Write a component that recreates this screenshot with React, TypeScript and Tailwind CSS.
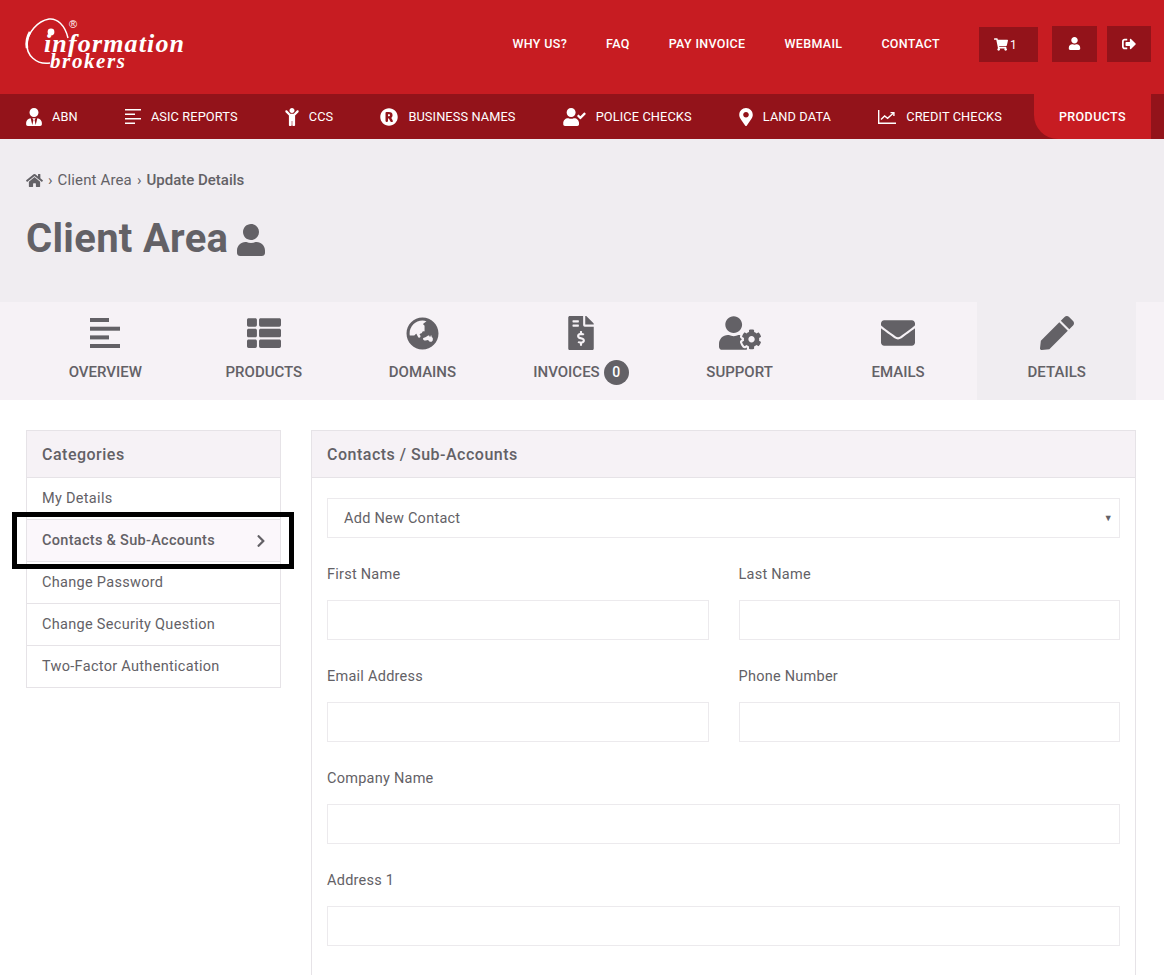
import React from 'react';
import {
  FaUserTie,
  FaChild,
  FaRegistered,
  FaUserCheck,
  FaMapMarkerAlt,
  FaShoppingCart,
  FaUser,
  FaSignOutAlt,
  FaHome,
  FaThList,
  FaGlobeAsia,
  FaFileInvoiceDollar,
  FaUserCog,
  FaEnvelope,
  FaPen,
  FaChevronRight,
} from 'react-icons/fa';

function Lines({ className }: { className?: string }) {
  return (
    <svg viewBox="0 0 16 15" className={className} fill="currentColor">
      <rect x="0" y="0" width="16" height="1.5" />
      <rect x="0" y="4.5" width="10" height="1.5" />
      <rect x="0" y="9" width="16" height="1.5" />
      <rect x="0" y="13.5" width="10" height="1.5" />
    </svg>
  );
}

function Bars({ className }: { className?: string }) {
  return (
    <svg viewBox="0 0 30 30" className={className} fill="currentColor">
      <rect x="0" y="0" width="19" height="4" />
      <rect x="0" y="8.7" width="30" height="4" />
      <rect x="0" y="17.4" width="19" height="4" />
      <rect x="0" y="26" width="30" height="4" />
    </svg>
  );
}

function ChartIcon({ className }: { className?: string }) {
  return (
    <svg viewBox="0 0 18 14" className={className} fill="none" stroke="currentColor" strokeWidth="1.4">
      <path d="M.7 0v13.3H18" />
      <path d="M3 9.5l3.6-3.6 3 2.4L15.5 3" />
      <path d="M12.5 2.6h3.4V6" />
    </svg>
  );
}

function Logo() {
  return (
    <svg viewBox="0 0 180 76" className="w-[180px] h-[76px]">
      <path d="M59 33C56 20 48 13 40 14 28 16 19 28 18 38c-1 12 9 22 23 20" fill="none" stroke="#fff" strokeWidth="1.5" />
      <path d="M21 27c-3 5-4 10-3 16" fill="none" stroke="#fff" strokeWidth="2.6" />
      <circle cx="42" cy="27" r="3.4" fill="#fff" />
      <text x="60" y="23" fill="#fff" fontFamily="'Liberation Sans', sans-serif" fontSize="11">®</text>
      <text x="35" y="47" textLength="140" fill="#fff" fontFamily="'Liberation Serif', serif" fontStyle="italic" fontWeight="700" fontSize="26">
        information
      </text>
      <text x="41" y="63" textLength="75" fill="#fff" fontFamily="'Liberation Serif', serif" fontStyle="italic" fontWeight="700" fontSize="21">
        brokers
      </text>
    </svg>
  );
}

const topLinks = ['Why Us?', 'FAQ', 'Pay Invoice', 'Webmail', 'Contact'];

const subLinks = [
  { label: 'ABN', icon: <FaUserTie className="w-4 h-[18px]" /> },
  { label: 'ASIC Reports', icon: <Lines className="w-4 h-[15px]" /> },
  { label: 'CCS', icon: <FaChild className="w-[14px] h-[18px]" /> },
  { label: 'Business Names', icon: <FaRegistered className="w-[18px] h-[18px]" /> },
  { label: 'Police Checks', icon: <FaUserCheck className="w-[23px] h-[18px]" /> },
  { label: 'Land Data', icon: <FaMapMarkerAlt className="w-[14px] h-[18px]" /> },
  { label: 'Credit Checks', icon: <ChartIcon className="w-[18px] h-[14px]" /> },
];

const tabs = [
  { label: 'Overview', icon: <Bars className="w-[30px] h-[30px]" /> },
  { label: 'Products', icon: <FaThList className="w-[34px] h-[34px]" /> },
  { label: 'Domains', icon: <FaGlobeAsia className="w-[33px] h-[33px]" /> },
  { label: 'Invoices', icon: <FaFileInvoiceDollar className="w-[26px] h-[34px]" />, badge: '0' },
  { label: 'Support', icon: <FaUserCog className="w-[42px] h-[34px]" /> },
  { label: 'Emails', icon: <FaEnvelope className="w-[36px] h-[34px]" /> },
  { label: 'Details', icon: <FaPen className="w-[34px] h-[34px]" />, active: true },
];

const categories = ['My Details', 'Contacts & Sub-Accounts', 'Change Password', 'Change Security Question', 'Two-Factor Authentication'];

function Field({ label }: { label: string }) {
  return (
    <div>
      <label className="block h-[62px] pt-[27px] text-[14.5px] leading-[20px] tracking-[0.25px] text-[#636166]">{label}</label>
      <input type="text" className="block w-full h-10 border border-[#eceaed] bg-white" />
    </div>
  );
}

export default function App() {
  return (
    <div className="h-[975px] overflow-hidden bg-white text-[#636166] font-['Roboto',sans-serif]">
      {/* top bar */}
      <header className="h-[94px] bg-[#c71c22] flex items-start justify-between pl-[9px] pr-[13px]">
        <div className="pt-[5px]">
          <Logo />
        </div>
        <div className="flex items-center pt-[26px] text-white">
          <nav className="flex gap-[39px] mr-[39px] text-[12.5px] font-medium uppercase tracking-[0.33px] leading-[36px]">
            {topLinks.map(l => (
              <a key={l}>{l}</a>
            ))}
          </nav>
          <div className="flex gap-[14px] items-end">
            <div className="w-[59px] h-[35px] bg-[#93131a] flex items-center pl-[15px] gap-[2px] text-[12px]">
              <FaShoppingCart className="w-[14px] h-[13px]" />1
            </div>
            <div className="flex gap-[10px]">
              <div className="w-[45px] h-9 bg-[#93131a] flex items-center justify-center">
                <FaUser className="w-[13px] h-[13px] mb-[1px]" />
              </div>
              <div className="w-[44px] h-9 bg-[#93131a] flex items-center justify-center">
                <FaSignOutAlt className="w-[14px] h-[14px]" />
              </div>
            </div>
          </div>
        </div>
      </header>

      {/* product nav */}
      <div className="h-[45px] bg-[#93131a] text-white flex items-center pl-[26px] pr-[13px] text-[12.8px] tracking-[0.1px] uppercase">
        <div className="flex justify-between w-[976px]">
          {subLinks.map(s => (
            <a key={s.label} className="flex items-center gap-[10px]">
              {s.icon}
              {s.label}
            </a>
          ))}
        </div>
        <a className="ml-auto self-stretch flex items-center pt-[1px] px-[25px] bg-[#c71c22] rounded-bl-[24px] text-[12.5px] font-medium tracking-[0.4px]">
          Products
        </a>
      </div>

      {/* page title */}
      <section className="h-[163px] bg-[#f0edf1] px-[26px] pt-[32px]">
        <div className="flex items-center gap-[5px] text-[15px] leading-[18px]">
          <FaHome className="w-[17px] h-[15px]" />
          <span>›</span>
          <span className="tracking-[0.15px]">Client Area</span>
          <span>›</span>
          <span className="font-medium">Update Details</span>
        </div>
        <h1 className="mt-[27px] flex items-center gap-[9px] text-[40px] leading-[46px] font-bold tracking-[0.3px]">
          Client Area
          <FaUser className="w-[28px] h-[32px] mt-[2px]" />
        </h1>
      </section>

      {/* tabs */}
      <div className="h-[98px] bg-[#f6f2f6] pl-[26px] pr-[28px] grid grid-cols-7">
        {tabs.map(t => (
          <a key={t.label} className={`flex flex-col items-center pt-[13px] ${t.active ? 'bg-[#f0edf1]' : ''}`}>
            <div className="h-[36px] flex items-center justify-center">{t.icon}</div>
            <div className="mt-[11px] h-[20px] flex items-center gap-[4px] text-[15px] font-medium uppercase">
              {t.label}
              {t.badge && (
                <span className="w-[25px] h-[25px] rounded-full bg-[#636166] text-white flex items-center justify-center text-[14px]">
                  {t.badge}
                </span>
              )}
            </div>
          </a>
        ))}
      </div>

      {/* body */}
      <main className="pl-[26px] pr-[28px] pt-[30px] flex gap-[30px] items-start">
        <aside className="relative w-[255px] shrink-0 border border-[#e6e3e7]">
          <h3 className="h-[47px] flex items-center px-[15px] pt-[1px] bg-[#f6f2f6] border-b border-[#e6e3e7] text-[16px] font-medium tracking-[0.5px]">
            Categories
          </h3>
          {categories.map((c, i) => (
            <a
              key={c}
              className={`flex items-center justify-between px-[15px] text-[14.5px] tracking-[0.3px] ${
                i < categories.length - 1 ? 'h-[42px] border-b border-[#e6e3e7]' : 'h-[41px]'
              } ${i === 1 ? 'bg-[#fbf7fb] font-medium' : ''}`}
            >
              {c}
              {i === 1 && <FaChevronRight className="w-[12px] h-[14px] mr-[-2px]" />}
            </a>
          ))}
          <div className="absolute left-[-15px] top-[81px] w-[282px] h-[57px] border-[5px] border-black" />
        </aside>

        <section className="flex-1 min-h-[700px] border border-[#e6e3e7]">
          <h3 className="h-[47px] flex items-center px-[15px] pt-[1px] bg-[#f6f2f6] border-b border-[#e6e3e7] text-[16px] font-medium tracking-[0.5px]">
            Contacts / Sub-Accounts
          </h3>
          <div className="px-[15px] pt-5">
            <div className="relative h-10 border border-[#eceaed] flex items-center px-4 pt-[2px] text-[14.5px] tracking-[0.25px]">
              Add New Contact
              <span className="absolute right-[6px] top-[13px] text-[9px] leading-[12px]">▼</span>
            </div>
            <div className="grid grid-cols-2 gap-x-[30px]">
              <Field label="First Name" />
              <Field label="Last Name" />
              <Field label="Email Address" />
              <Field label="Phone Number" />
            </div>
            <Field label="Company Name" />
            <Field label="Address 1" />
          </div>
        </section>
      </main>
    </div>
  );
}
